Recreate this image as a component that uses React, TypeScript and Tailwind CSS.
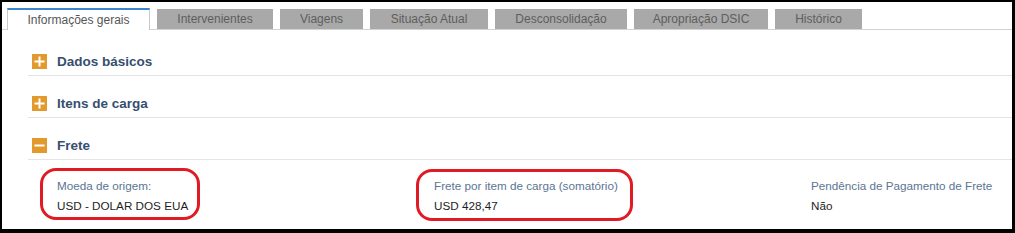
import React from "react";

const TABS = [
  { label: "Intervenientes", w: "w-[116px]" },
  { label: "Viagens", w: "w-[83px]" },
  { label: "Situação Atual", w: "w-[118px]" },
  { label: "Desconsolidação", w: "w-[132px]" },
  { label: "Apropriação DSIC", w: "w-[134px]" },
  { label: "Histórico", w: "w-[87px]" },
];

function ToggleIcon({ open }: { open?: boolean }) {
  return (
    <span className="flex h-[15px] w-[15px] items-center justify-center bg-[#e29a2e]">
      <svg width="11" height="11" viewBox="0 0 11 11">
        <rect x="0.5" y="4.5" width="10" height="2" fill="#fff" />
        {!open && <rect x="4.5" y="0.5" width="2" height="10" fill="#fff" />}
      </svg>
    </span>
  );
}

function Section({ title, open }: { title: string; open?: boolean }) {
  return (
    <div className="flex h-[42px] items-end border-b border-[#e4e4e4] pb-[6px] pl-[4px]">
      <ToggleIcon open={open} />
      <span className="ml-[10px] text-[13.5px] leading-[15px] font-bold text-[#364e6f]">
        {title}
      </span>
    </div>
  );
}

function Field({ label, value }: { label: string; value: string }) {
  return (
    <div className="flex flex-col gap-[6px] text-[11.7px] leading-[14px]">
      <div className="text-[#5b7593]">{label}</div>
      <div className="text-[#1e1e1e]">{value}</div>
    </div>
  );
}

export default function App() {
  return (
    <div className="relative h-[233px] w-[1015px] overflow-hidden border-2 border-r-[3px] border-b-[4px] border-black bg-white font-['Liberation_Sans',Arial,sans-serif]">
      <div className="flex items-end gap-[7px] border-b border-[#d2d2d2] pl-[5px] pt-[6px]">
        <div className="-mb-px flex h-[22px] w-[143px] items-center justify-center border border-b-0 border-[#c9c9c9] border-t-[2px] border-t-[#3b86c8] bg-white text-[12px] text-[#555]">
          Informações gerais
        </div>
        {TABS.map((t) => (
          <div
            key={t.label}
            className={`flex h-[20px] items-center justify-center bg-[#a9a9a9] text-[12px] text-[#5e5e5e] ${t.w}`}
          >
            {t.label}
          </div>
        ))}
      </div>

      <div className="ml-[26px] pt-[4px]">
        <Section title="Dados básicos" />
        <Section title="Itens de carga" />
        <Section title="Frete" open />
        <div className="grid grid-cols-[377px_377px_377px] pl-[29px] pt-[19px]">
          <Field label="Moeda de origem:" value="USD - DOLAR DOS EUA" />
          <Field label="Frete por item de carga (somatório)" value="USD 428,47" />
          <Field label="Pendência de Pagamento de Frete" value="Não" />
        </div>
      </div>

      <div className="absolute left-[38px] top-[166px] h-[52px] w-[160px] rounded-[16px] border-[3px] border-[#e01b24]" />
      <div className="absolute left-[414px] top-[167px] h-[52px] w-[217px] rounded-[16px] border-[3px] border-[#e01b24]" />
    </div>
  );
}
